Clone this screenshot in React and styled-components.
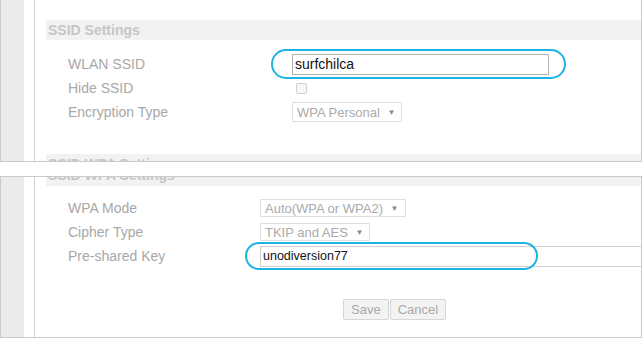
import React from "react";
import styled, { createGlobalStyle } from "styled-components";

const GlobalStyle = createGlobalStyle`
  html, body {
    margin: 0;
    padding: 0;
    background: #ffffff;
    font-family: "Liberation Sans", Arial, sans-serif;
  }
  * {
    box-sizing: border-box;
  }
`;

const App = () => {
  return (
    <>
      <GlobalStyle />
      <Page>
        <Panel $noTop>
          <SideStrip />
          <Gutter />
          <Content $top={20}>
            <SectionHeader>SSID Settings</SectionHeader>
            <Rows $gap={12} $labelWidth={224}>
              <Row>
                <Label>WLAN SSID</Label>
                <Cell>
                  <InputWrap>
                    <TextInput $width={257} $size={14} value="surfchilca" readOnly />
                    <Highlight $left={-21} $top={-5} $width={295} $height={30} />
                  </InputWrap>
                </Cell>
              </Row>
              <Row>
                <Label>Hide SSID</Label>
                <Cell>
                  <Checkbox />
                </Cell>
              </Row>
              <Row>
                <Label>Encryption Type</Label>
                <Cell>
                  <Select $height={20}>
                    WPA Personal <Caret>▼</Caret>
                  </Select>
                </Cell>
              </Row>
            </Rows>
            <SectionHeader $mt={30}>SSID WPA Settings</SectionHeader>
          </Content>
        </Panel>

        <Panel $mt={14}>
          <SideStrip />
          <Gutter />
          <Content>
            <SectionHeader $mt={-11} $textTop={2}>
              SSID WPA Settings
            </SectionHeader>
            <Rows $gap={10} $labelWidth={192}>
              <Row>
                <Label>WPA Mode</Label>
                <Cell>
                  <Select $height={18}>
                    Auto(WPA or WPA2) <Caret>▼</Caret>
                  </Select>
                </Cell>
              </Row>
              <Row>
                <Label>Cipher Type</Label>
                <Cell>
                  <Select $height={18}>
                    TKIP and AES <Caret>▼</Caret>
                  </Select>
                </Cell>
              </Row>
              <Row>
                <Label>Pre-shared Key</Label>
                <Cell>
                  <InputWrap>
                    <TextInput $width={420} $size={12.5} $light value="unodiversion77" readOnly />
                    <Highlight $left={-15} $top={-4} $width={293} $height={28} />
                  </InputWrap>
                </Cell>
              </Row>
            </Rows>
            <Buttons>
              <Button>Save</Button>
              <Button>Cancel</Button>
            </Buttons>
          </Content>
        </Panel>
      </Page>
    </>
  );
};

export default App;

// Styled part

const Page = styled.div`
  width: 642px;
  height: 338px;
  display: flex;
  flex-direction: column;
  overflow: hidden;
`;

const Panel = styled.section`
  display: flex;
  height: 162px;
  margin-top: ${(p) => p.$mt || 0}px;
  border: 1px solid #cacaca;
  border-top: ${(p) => (p.$noTop ? "none" : "1px solid #cacaca")};
  overflow: hidden;
  flex-shrink: 0;
`;

const SideStrip = styled.div`
  width: 23px;
  flex-shrink: 0;
  background: #ebebeb;
`;

const Gutter = styled.div`
  width: 11px;
  flex-shrink: 0;
  background: #ffffff;
  border-right: 1px solid #d2d2d2;
`;

const Content = styled.div`
  flex: 1;
  min-width: 0;
  padding-left: 11px;
  padding-top: ${(p) => p.$top || 0}px;
  display: flex;
  flex-direction: column;
`;

const SectionHeader = styled.h2`
  margin: ${(p) => p.$mt || 0}px 0 0 0;
  height: 20px;
  flex-shrink: 0;
  background: #f2f2f2;
  color: #c6c6c6;
  font-size: 14px;
  font-weight: bold;
  line-height: 14px;
  padding: ${(p) => (p.$textTop != null ? p.$textTop : 3)}px 0 0 2px;
  overflow: hidden;
`;

const Rows = styled.div`
  margin-top: ${(p) => p.$gap}px;
  display: grid;
  grid-template-columns: ${(p) => p.$labelWidth}px 1fr;
  grid-auto-rows: 24px;
  padding-left: 22px;
`;

const Row = styled.div`
  display: contents;
`;

const Label = styled.div`
  display: flex;
  align-items: center;
  font-size: 14px;
  color: #a8a8a8;
  white-space: nowrap;
`;

const Cell = styled.div`
  display: flex;
  align-items: center;
  min-width: 0;
`;

const InputWrap = styled.span`
  position: relative;
  display: inline-flex;
`;

const TextInput = styled.input`
  width: ${(p) => p.$width}px;
  height: 21px;
  margin: 0;
  padding: 0 0 0 2px;
  border: 1px solid ${(p) => (p.$light ? "#cfcfcf" : "#b4b4b4")};
  border-radius: 0;
  background: #ffffff;
  color: #111111;
  font-family: "Liberation Sans", Arial, sans-serif;
  font-size: ${(p) => p.$size}px;
  outline: none;
`;

const Highlight = styled.span`
  position: absolute;
  left: ${(p) => p.$left}px;
  top: ${(p) => p.$top}px;
  width: ${(p) => p.$width}px;
  height: ${(p) => p.$height}px;
  border: 2px solid #1db4e3;
  border-radius: 16px;
  pointer-events: none;
`;

const Checkbox = styled.span`
  display: inline-block;
  width: 11px;
  height: 11px;
  margin-left: 4px;
  border: 1px solid #cfcfcf;
  border-radius: 2px;
  background: #f7f7f7;
`;

const Select = styled.span`
  display: inline-flex;
  align-items: center;
  height: ${(p) => p.$height}px;
  padding: 0 6px 0 4px;
  border: 1px solid #dedede;
  border-radius: 1px;
  background: #ffffff;
  color: #aaaaaa;
  font-size: 13px;
  white-space: pre;
`;

const Caret = styled.span`
  margin-left: 4px;
  font-size: 8px;
  color: #8a8a8a;
`;

const Buttons = styled.div`
  margin-top: 31px;
  padding-left: 297px;
  display: flex;
  gap: 1px;
`;

const Button = styled.button`
  height: 21px;
  padding: 0 7px;
  margin: 0;
  border: 1px solid #d6d6d6;
  border-radius: 2px;
  background: #f3f3f3;
  color: #a9a9a9;
  font-family: "Liberation Sans", Arial, sans-serif;
  font-size: 13px;
  cursor: pointer;
`;
